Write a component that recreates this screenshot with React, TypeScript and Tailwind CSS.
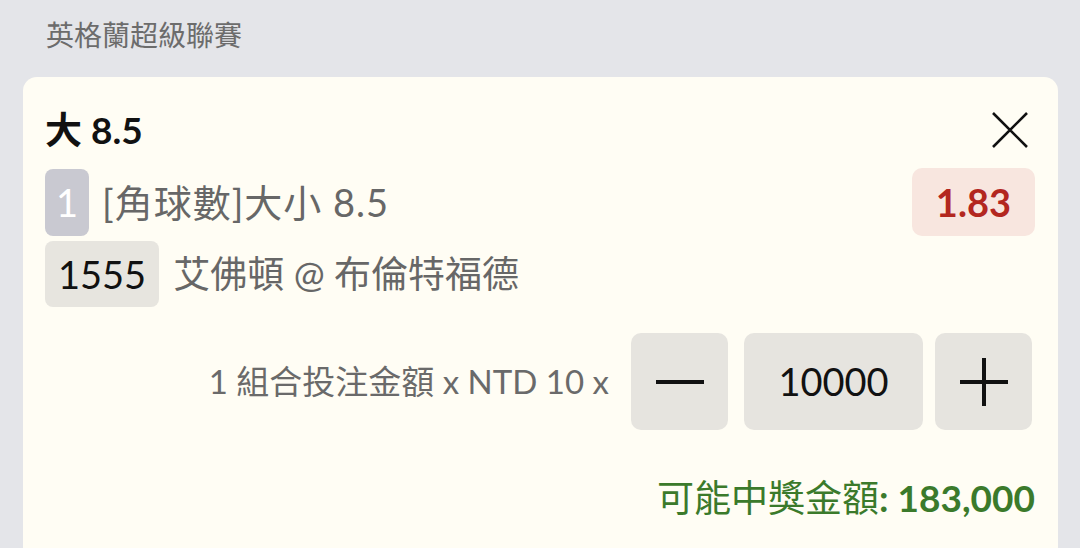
const font = { fontFamily: "Lato, 'Noto Sans CJK TC', sans-serif" };

function CloseIcon() {
  return (
    <svg width="38" height="38" viewBox="0 0 38 38">
      <path d="M2 2L36 36M36 2L2 36" stroke="#111" strokeWidth="2.6" />
    </svg>
  );
}

function MinusIcon() {
  return (
    <svg width="50" height="50" viewBox="0 0 50 50">
      <path d="M1 25H49" stroke="#111" strokeWidth="4" />
    </svg>
  );
}

function PlusIcon() {
  return (
    <svg width="50" height="50" viewBox="0 0 50 50">
      <path d="M1 25H49M25 1V49" stroke="#111" strokeWidth="4" />
    </svg>
  );
}

export default function App() {
  return (
    <div className="h-[548px] overflow-hidden bg-[#e4e5e9]" style={font}>
      {/* League Header */}
      <div className="h-[77px] pl-[46px] pt-[16px] text-[28px] leading-[38px] text-[#6c6c6c]">
        英格蘭超級聯賽
      </div>

      {/* Bet Card */}
      <div className="ml-[23px] mr-[22px] h-[500px] rounded-t-[14px] bg-[#fffdf4] pl-[22px] pr-[23px] pt-[33px]">
        <div className="flex h-[40px] items-center justify-between">
          <span className="text-[37px] font-bold leading-[40px] text-[#111]">大 8.5</span>
          <span className="mr-[6px]">
            <CloseIcon />
          </span>
        </div>

        <div className="mt-[18px] flex h-[68px] items-center justify-between">
          <div className="flex items-center gap-[13px]">
            <span className="flex h-[67px] items-center rounded-[8px] bg-[#c9c9d1] px-[11px] text-[38px] text-white">
              1
            </span>
            <span className="text-[38px] tracking-[1px] text-[#676767]">[角球數]大小 8.5</span>
          </div>
          <span className="flex h-[68px] items-center rounded-[10px] bg-[#f8e6df] px-[24px] text-[38px] font-bold text-[#b3271f]">
            1.83
          </span>
        </div>

        <div className="mt-[5px] flex items-center gap-[14px]">
          <span className="flex h-[66px] items-center rounded-[8px] bg-[#e7e5df] px-[13px] text-[38px] text-[#111]">
            1555
          </span>
          <span className="text-[37px] text-[#676767]">艾佛頓 @ 布倫特福德</span>
        </div>

        <div className="mt-[26px] flex items-center justify-end pr-[3px]">
          <span className="mr-[22px] text-[33px] text-[#6a6a6a]">1 組合投注金額 x NTD 10 x</span>
          <button className="flex h-[97px] w-[97px] items-center justify-center rounded-[10px] bg-[#e6e4df]">
            <MinusIcon />
          </button>
          <div className="ml-[16px] flex h-[97px] w-[179px] items-center justify-center rounded-[10px] bg-[#e6e4df] text-[38px] text-[#111]">
            10000
          </div>
          <button className="ml-[12px] flex h-[97px] w-[97px] items-center justify-center rounded-[10px] bg-[#e6e4df]">
            <PlusIcon />
          </button>
        </div>

        <div className="mt-[46px] text-right text-[37px] leading-[44px] text-[#3b7a2b]">
          可能中獎金額<span className="font-bold">: 183,000</span>
        </div>
      </div>
    </div>
  );
}
